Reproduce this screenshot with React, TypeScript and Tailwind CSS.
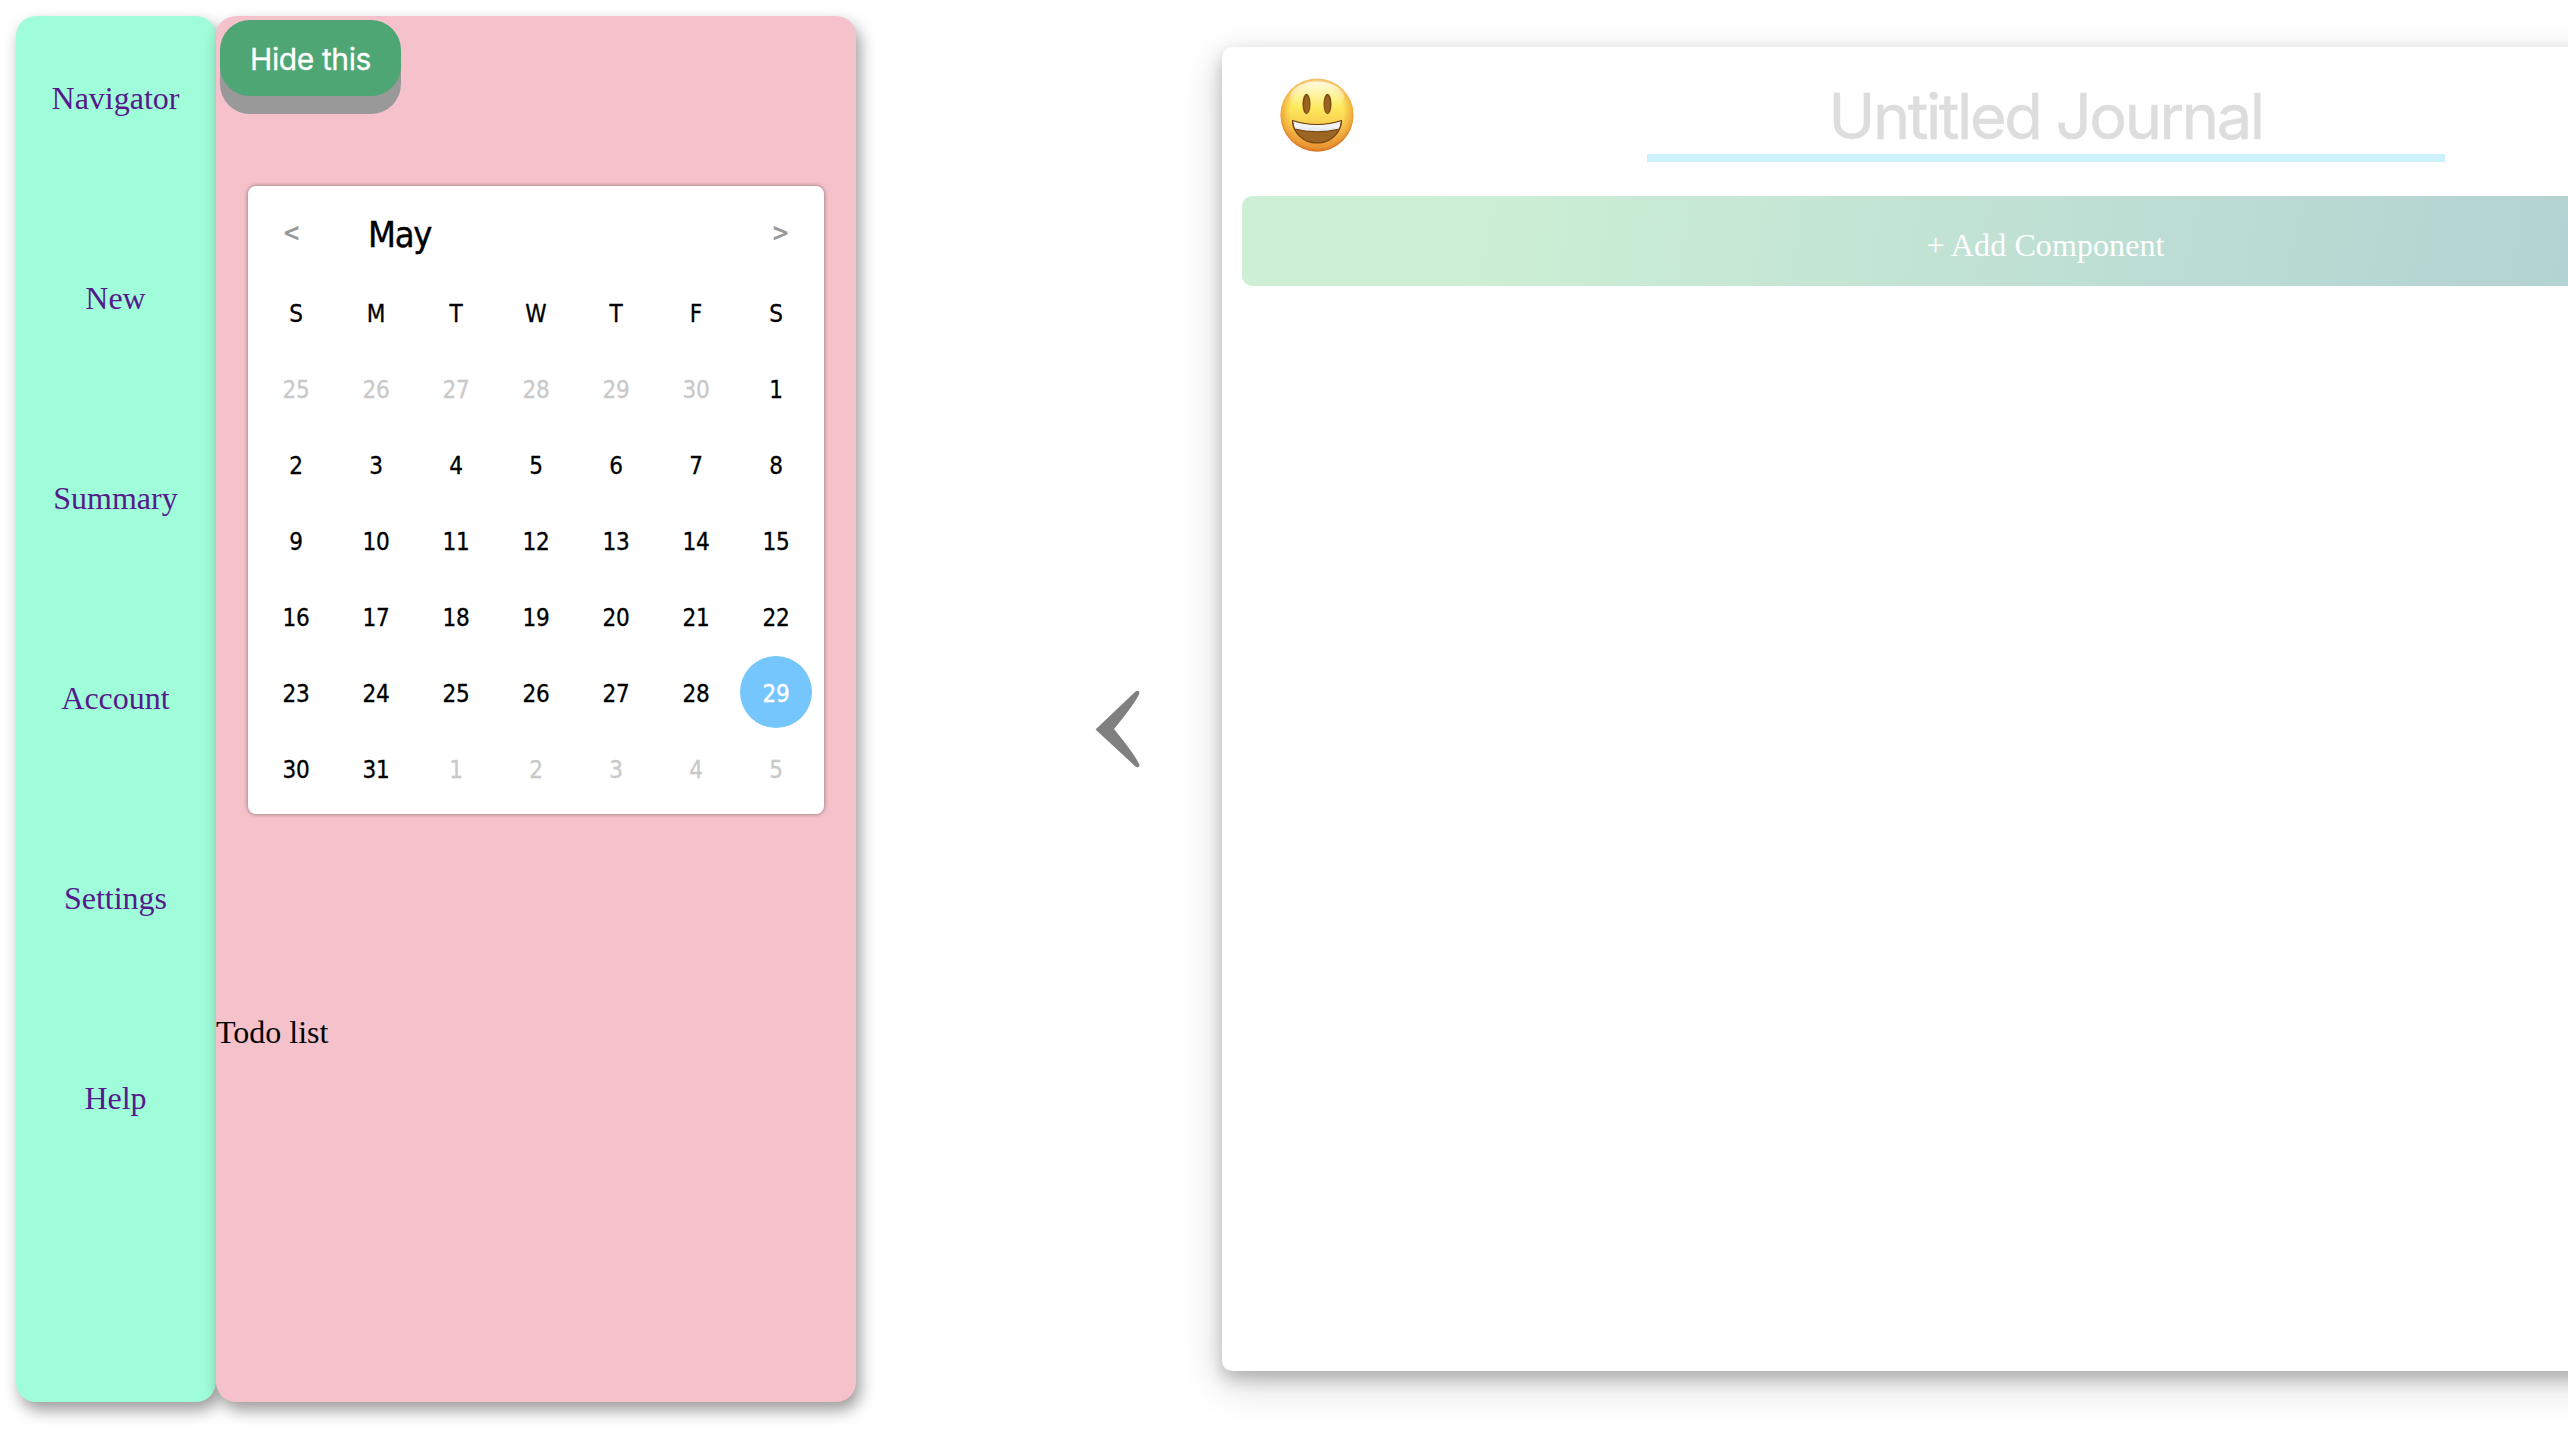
const links = ["Navigator", "New", "Summary", "Account", "Settings", "Help"];
const weekdays = ["S", "M", "T", "W", "T", "F", "S"];

type Day = { label: number; muted: boolean; selected: boolean };

const days: Day[] = Array.from({ length: 42 }, (_, i) => {
  const n = i - 5;
  if (n < 1) return { label: n + 30, muted: true, selected: false };
  if (n > 31) return { label: n - 31, muted: true, selected: false };
  return { label: n, muted: false, selected: n === 29 };
});

function Sidebar() {
  return (
    <nav className="flex h-[1386px] w-[200px] shrink-0 flex-col items-center gap-[164px] rounded-[20px] bg-[#a0fdd9] pt-[64px] pr-px shadow-[4px_8px_16px_rgba(0,0,0,0.4)]">
      {links.map((l) => (
        <a key={l} href="#" className="h-9 text-[32px] leading-9 text-[#551a8b]">
          {l}
        </a>
      ))}
    </nav>
  );
}

function Calendar() {
  return (
    <section className="mt-[90px] ml-8 h-[628px] w-[576px] rounded-lg bg-white px-2 font-['DejaVu_Sans_Condensed','DejaVu_Sans',sans-serif] text-[24px] shadow-[0_0_4px_rgba(0,0,0,0.45)] [font-stretch:condensed]">
      <header className="flex h-[90px] items-center">
        <button className="w-[71px] pt-[3px] text-center text-[24px] font-bold text-[#999]">&lt;</button>
        <h2 className="flex-1 pt-2 pl-[41px] text-[36px] tracking-[-1.3px] [-webkit-text-stroke:0.4px_black]">May</h2>
        <button className="w-[71px] pt-[3px] text-center text-[24px] font-bold text-[#999]">&gt;</button>
      </header>
      <div className="grid grid-cols-7">
        {weekdays.map((d, i) => (
          <div key={i} className="flex h-[76px] items-center justify-center [-webkit-text-stroke:0.3px_black]">
            {d}
          </div>
        ))}
        {days.map((d, i) => (
          <div key={i} className="flex h-[76px] items-center justify-center tracking-[-0.2px]">
            {d.selected ? (
              <span className="-mt-[4px] flex size-[72px] items-center justify-center rounded-full bg-[#74c6fd] pt-[3px] text-white [-webkit-text-stroke:0.4px_white]">
                {d.label}
              </span>
            ) : (
              <span className={d.muted ? "text-[#c9c9c9] [-webkit-text-stroke:0.3px_#c9c9c9]" : "text-black [-webkit-text-stroke:0.3px_black]"}>
                {d.label}
              </span>
            )}
          </div>
        ))}
      </div>
    </section>
  );
}

function Grin() {
  return (
    <svg viewBox="0 0 74 74" className="size-[74px]">
      <defs>
        <linearGradient id="face" x1="0" y1="0" x2="0" y2="1">
          <stop offset="0" stopColor="#fff6b8" />
          <stop offset="0.38" stopColor="#fdea5c" />
          <stop offset="0.7" stopColor="#f7c64d" />
          <stop offset="1" stopColor="#e0872c" />
        </linearGradient>
        <radialGradient id="rim" cx="0.5" cy="0.47" r="0.53">
          <stop offset="0.68" stopColor="#f0a030" stopOpacity="0" />
          <stop offset="0.9" stopColor="#ec9733" stopOpacity="0.65" />
          <stop offset="1" stopColor="#cf6f20" stopOpacity="0.95" />
        </radialGradient>
        <linearGradient id="shine" x1="0" y1="0" x2="0" y2="1">
          <stop offset="0" stopColor="#fffce6" stopOpacity="0.95" />
          <stop offset="1" stopColor="#fff27a" stopOpacity="0" />
        </linearGradient>
        <linearGradient id="teeth" x1="0" y1="0" x2="0" y2="1">
          <stop offset="0" stopColor="#e3e5ea" />
          <stop offset="0.5" stopColor="#f6f7f9" />
          <stop offset="1" stopColor="#dfe2e8" />
        </linearGradient>
        <clipPath id="mouth">
          <path d="M12.5 42.5Q37 50.5 61.5 42.5C61.5 54 51 65 37 65S12.5 54 12.5 42.5Z" />
        </clipPath>
      </defs>
      <circle cx="37" cy="37" r="36.5" fill="url(#face)" />
      <circle cx="37" cy="37" r="36.5" fill="url(#rim)" />
      <ellipse cx="37" cy="19" rx="27" ry="15.5" fill="url(#shine)" />
      <ellipse cx="26.5" cy="26" rx="4" ry="10.2" fill="#7c4a12" />
      <ellipse cx="26.8" cy="26.5" rx="2.7" ry="8.8" fill="#996322" />
      <ellipse cx="47.5" cy="26" rx="4" ry="10.2" fill="#7c4a12" />
      <ellipse cx="47.2" cy="26.5" rx="2.7" ry="8.8" fill="#996322" />
      <g clipPath="url(#mouth)">
        <rect x="10" y="38" width="54" height="30" fill="#9c6524" />
        <path d="M12 42Q37 50.5 62 42L59.5 51Q37 56.5 14.5 51Z" fill="url(#teeth)" stroke="#6f400e" strokeWidth="1" />
      </g>
      <path
        d="M12.5 42.5Q37 50.5 61.5 42.5C61.5 54 51 65 37 65S12.5 54 12.5 42.5Z"
        fill="none"
        stroke="#6f400e"
        strokeWidth="1.2"
        strokeLinejoin="round"
      />
    </svg>
  );
}

function Journal() {
  return (
    <main className="mt-[31px] h-[1324px] w-[1647px] shrink-0 rounded-[10px] bg-white px-5 shadow-[0_8px_16px_rgba(0,0,0,0.2),0_12px_40px_rgba(0,0,0,0.19)]">
      <header className="grid h-[149px] grid-cols-[1fr_798px_1fr]">
        <div className="pt-[31px] pl-[38px]">
          <Grin />
        </div>
        <h1 className="mt-[24px] h-[91px] border-b-8 border-[#cdf2fd] text-center font-['Inter',sans-serif] text-[63px] leading-[91px] tracking-[-2.4px] text-[#ddd] [-webkit-text-stroke:0.5px_#ddd]">
          Untitled Journal
        </h1>
      </header>
      <button className="flex h-[90px] w-full items-center justify-center rounded-[10px] bg-[linear-gradient(100deg,#cdf0d5_12%,#abc9d2_105%)] pt-2 text-[32px] tracking-[0.1px] text-white">
        + Add Component
      </button>
    </main>
  );
}

export default function App() {
  return (
    <div className="flex h-[1440px] w-[2568px] items-start overflow-hidden bg-white p-4 font-['Liberation_Serif',serif] text-black">
      <Sidebar />
      <aside className="h-[1386px] w-[640px] shrink-0 rounded-[20px] bg-[#f5c2cb] pt-1 shadow-[4px_8px_16px_rgba(0,0,0,0.4)]">
        <button className="ml-1 block h-[76px] w-[181px] rounded-[30px] bg-[#4ea674] pt-0.5 font-['Inter',sans-serif] text-[30px] tracking-[-0.4px] text-white shadow-[0_18px_#999] [-webkit-text-stroke:0.3px_white]">
          Hide this
        </button>
        <Calendar />
        <p className="mt-[200px] text-[32px] leading-9">Todo list</p>
      </aside>
      <div className="flex h-[1426px] w-[366px] shrink-0 items-center pl-[239px]">
        <svg viewBox="0 0 46 78" className="h-[78px] w-[46px]">
          <path d="M0.5 39.5L40.5 1.5Q44 -0.5 44.5 3Q42 11 19 39Q41 66 44.5 75Q44 78.5 40.5 76.5Z" fill="#808080" />
        </svg>
      </div>
      <Journal />
    </div>
  );
}
